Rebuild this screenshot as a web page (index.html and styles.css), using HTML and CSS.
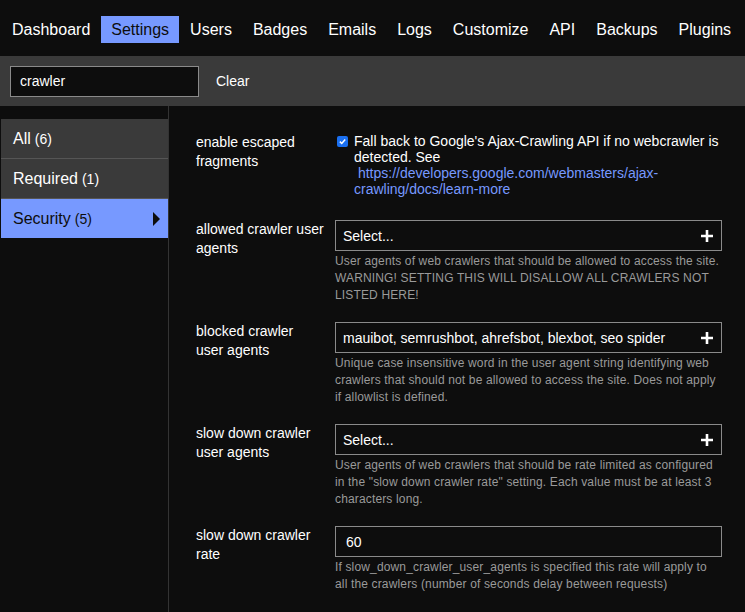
FILE: index.html
```html
<!DOCTYPE html>
<html lang="en">
<head>
  <meta charset="UTF-8" />
  <title>Admin | Settings</title>
  <link rel="stylesheet" href="styles.css">
</head>
<body>

  <!-- Top nav -->
  <nav class="admin-nav">
    <a class="nav-item">Dashboard</a>
    <a class="nav-item active">Settings</a>
    <a class="nav-item">Users</a>
    <a class="nav-item">Badges</a>
    <a class="nav-item">Emails</a>
    <a class="nav-item">Logs</a>
    <a class="nav-item">Customize</a>
    <a class="nav-item">API</a>
    <a class="nav-item">Backups</a>
    <a class="nav-item">Plugins</a>
  </nav>

  <!-- Filter bar -->
  <div class="filter-bar">
    <input class="filter-input" type="text" value="crawler">
    <span class="clear-btn">Clear</span>
  </div>

  <div class="admin-body">
    <ul class="side-nav">
      <li class="side-item">All <small>(6)</small></li>
      <li class="side-item">Required <small>(1)</small></li>
      <li class="side-item active">Security <small>(5)</small><span class="caret"></span></li>
    </ul>

    <div class="settings">

      <div class="setting first">
        <div class="setting-label">enable escaped fragments</div>
        <div class="setting-value check-row">
          <span class="checkbox">
            <svg width="12" height="12" viewBox="0 0 12 12"><path d="M2.5 6.2 L5 8.6 L9.6 3.4" fill="none" stroke="#fff" stroke-width="2"/></svg>
          </span>
          <span class="check-text">Fall back to Google's Ajax-Crawling API if no webcrawler is detected. See<br>&nbsp;<a class="link">https://developers.google.com/webmasters/ajax-crawling/docs/learn-more</a></span>
        </div>
      </div>

      <div class="setting">
        <div class="setting-label">allowed crawler user agents</div>
        <div class="setting-value">
          <div class="select-box">
            <span>Select...</span>
            <svg class="plus" width="12" height="12" viewBox="0 0 12 12"><path d="M6 0 V12 M0 6 H12" stroke="#fff" stroke-width="2.6"/></svg>
          </div>
          <div class="desc">User agents of web crawlers that should be allowed to access the site. WARNING! SETTING THIS WILL DISALLOW ALL CRAWLERS NOT LISTED HERE!</div>
        </div>
      </div>

      <div class="setting">
        <div class="setting-label">blocked crawler user agents</div>
        <div class="setting-value">
          <div class="select-box">
            <span>mauibot, semrushbot, ahrefsbot, blexbot, seo spider</span>
            <svg class="plus" width="12" height="12" viewBox="0 0 12 12"><path d="M6 0 V12 M0 6 H12" stroke="#fff" stroke-width="2.6"/></svg>
          </div>
          <div class="desc">Unique case insensitive word in the user agent string identifying web crawlers that should not be allowed to access the site. Does not apply if allowlist is defined.</div>
        </div>
      </div>

      <div class="setting">
        <div class="setting-label">slow down crawler user agents</div>
        <div class="setting-value">
          <div class="select-box">
            <span>Select...</span>
            <svg class="plus" width="12" height="12" viewBox="0 0 12 12"><path d="M6 0 V12 M0 6 H12" stroke="#fff" stroke-width="2.6"/></svg>
          </div>
          <div class="desc">User agents of web crawlers that should be rate limited as configured in the "slow down crawler rate" setting. Each value must be at least 3 characters long.</div>
        </div>
      </div>

      <div class="setting">
        <div class="setting-label">slow down crawler rate</div>
        <div class="setting-value">
          <input class="text-input" type="text" value="60">
          <div class="desc">If slow_down_crawler_user_agents is specified this rate will apply to all the crawlers (number of seconds delay between requests)</div>
        </div>
      </div>

    </div>
  </div>

</body>
</html>
```

FILE: styles.css
```css
body {
  font-family: 'Liberation Sans', Arial, sans-serif;
  margin: 0;
  padding: 0;
  background-color: #0d0d0d;
  color: #fff;
  overflow: hidden;
}

/* Top nav */
.admin-nav {
  display: flex;
  height: 56px;
  box-sizing: border-box;
  padding: 16px 0 0 2px;
}

.nav-item {
  font-size: 16px;
  line-height: 19px;
  padding: 4px 10px;
  margin-right: 1px;
  color: #fff;
  height: 19px;
}

.nav-item.active {
  background-color: #7799ff;
  color: #0d0d0d;
}

/* Filter bar */
.filter-bar {
  display: flex;
  align-items: center;
  height: 50px;
  box-sizing: border-box;
  padding: 0 10px;
  background-color: #3a3a3a;
}

.filter-input {
  width: 189px;
  height: 31px;
  box-sizing: border-box;
  background: #0d0d0d;
  border: 1px solid #8a8a8a;
  color: #fff;
  font-family: inherit;
  font-size: 14px;
  padding: 0 9px;
  outline: none;
}

.clear-btn {
  font-size: 14px;
  margin-left: 17px;
}

/* Body */
.admin-body {
  display: flex;
}

.side-nav {
  list-style: none;
  margin: 0;
  padding: 13px 0 0 1px;
  width: 167px;
  min-height: 506px;
  border-right: 1px solid #333;
}

.side-item {
  display: flex;
  align-items: center;
  height: 39px;
  padding-left: 12px;
  font-size: 16px;
  background-color: #3a3a3a;
  border-bottom: 1px solid #555;
}

.side-item small {
  font-size: 14px;
  margin-left: 4px;
}

.side-item.active {
  background-color: #7799ff;
  color: #0d0d0d;
  border-bottom: none;
}

.caret {
  margin-left: auto;
  margin-right: 8px;
  width: 0;
  height: 0;
  border-top: 7px solid transparent;
  border-bottom: 7px solid transparent;
  border-left: 7px solid #0d0d0d;
}

/* Settings */
.settings {
  padding: 27px 0 0 27px;
}

.setting {
  display: flex;
  margin-bottom: 18px;
}

.setting.first {
  margin-bottom: 23px;
}

.setting-label {
  width: 128px;
  padding-right: 11px;
  font-size: 14px;
  line-height: 19px;
}

.setting-value {
  width: 387px;
}

.check-row {
  display: flex;
  align-items: flex-start;
  font-size: 14px;
  line-height: 16px;
}

.checkbox {
  flex: none;
  width: 11px;
  height: 11px;
  margin: 3px 6px 0 2px;
  border-radius: 2px;
  background-color: #1a6ff0;
  display: flex;
  align-items: center;
  justify-content: center;
}

.checkbox svg {
  width: 9px;
  height: 9px;
}

.link {
  color: #7799ff;
}

.select-box {
  display: flex;
  align-items: center;
  justify-content: space-between;
  height: 31px;
  box-sizing: border-box;
  border: 1px solid #8a8a8a;
  padding: 0 8px 0 7px;
  font-size: 14px;
}

.text-input {
  display: block;
  width: 387px;
  height: 31px;
  box-sizing: border-box;
  border: 1px solid #8a8a8a;
  background: #0d0d0d;
  color: #fff;
  font-family: inherit;
  font-size: 14px;
  padding: 0 10px;
  margin: 0;
  outline: none;
}

.desc {
  padding-top: 2px;
  font-size: 12px;
  line-height: 17px;
  letter-spacing: 0.15px;
  color: #9a9a9a;
}
```
